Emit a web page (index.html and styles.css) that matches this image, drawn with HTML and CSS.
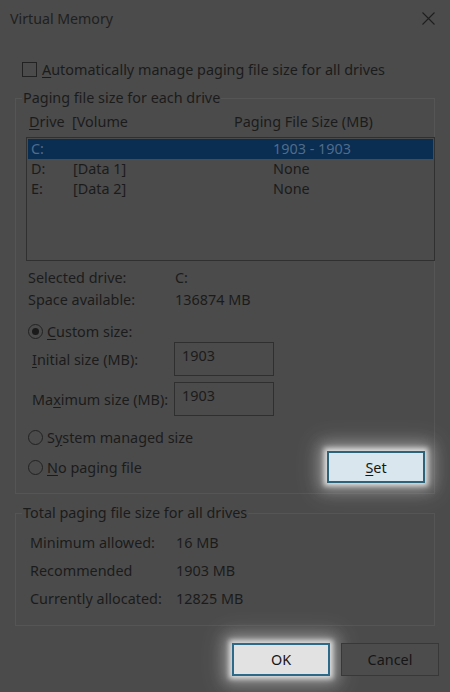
FILE: index.html
```html
<!DOCTYPE html>
<html>
<head>
<meta charset="utf-8">
<title>Virtual Memory</title>
<link rel="stylesheet" href="styles.css">
</head>
<body>
<div class="dialog">
  <div class="titlebar">
    <span class="title">Virtual Memory</span>
    <svg class="close" width="13" height="13" viewBox="0 0 13 13"><path d="M0.5 0.5L12.5 12.5M12.5 0.5L0.5 12.5" stroke="#1f1f1f" stroke-width="1.1" fill="none"/></svg>
  </div>

  <div class="auto-row">
    <span class="checkbox"></span>
    <span><u>A</u>utomatically manage paging file size for all drives</span>
  </div>

  <fieldset class="group group-drives">
    <legend>Paging file size for each drive</legend>
    <div class="list-header">
      <span class="col-drive"><u>D</u>rive</span>
      <span class="col-volume">[Volume</span>
      <span>Paging File Size (MB)</span>
    </div>
    <div class="listbox">
      <div class="list-row selected"><span class="c-drive">C:</span><span class="c-volume"></span><span>1903 - 1903</span></div>
      <div class="list-row"><span class="c-drive">D:</span><span class="c-volume">[Data 1]</span><span>None</span></div>
      <div class="list-row"><span class="c-drive">E:</span><span class="c-volume">[Data 2]</span><span>None</span></div>
    </div>

    <div class="info-row first"><span class="info-label">Selected drive:</span><span>C:</span></div>
    <div class="info-row"><span class="info-label">Space available:</span><span>136874 MB</span></div>

    <div class="radio-row custom"><span class="radio checked"></span><span><u>C</u>ustom size:</span></div>
    <div class="size-row"><span class="size-label"><u>I</u>nitial size (MB):</span><span class="input">1903</span></div>
    <div class="size-row second"><span class="size-label">Ma<u>x</u>imum size (MB):</span><span class="input">1903</span></div>

    <div class="radio-row system"><span class="radio"></span><span>S<u>y</u>stem managed size</span></div>
    <div class="last-row">
      <div class="radio-row"><span class="radio"></span><span><u>N</u>o paging file</span></div>
      <button class="btn btn-focus btn-set"><u>S</u>et</button>
    </div>
  </fieldset>

  <fieldset class="group group-total">
    <legend>Total paging file size for all drives</legend>
    <div class="total-row first"><span class="total-label">Minimum allowed:</span><span>16 MB</span></div>
    <div class="total-row"><span class="total-label">Recommended</span><span>1903 MB</span></div>
    <div class="total-row"><span class="total-label">Currently allocated:</span><span>12825 MB</span></div>
  </fieldset>

  <div class="buttons">
    <button class="btn btn-focus">OK</button>
    <button class="btn btn-dim">Cancel</button>
  </div>
</div>
</body>
</html>
```

FILE: styles.css
```css
html, body {
  margin: 0;
  padding: 0;
}
body {
  width: 450px;
  height: 692px;
  background: #4b4b4b;
  overflow: hidden;
  font-family: "Noto Sans", "Open Sans", sans-serif;
  font-size: 14.4px;
  color: #1b1b1b;
}
u { text-decoration: underline; text-underline-offset: 2px; }

.dialog { display: flex; flex-direction: column; }

.titlebar {
  height: 36px;
  display: flex;
  align-items: center;
  justify-content: space-between;
  padding: 0 15px 0 10px;
}
.title { font-size: 14.2px; color: #202020; }
.close { display: block; margin-top: 1px; }

.auto-row {
  margin-top: 23px;
  height: 20px;
  display: flex;
  align-items: center;
  padding-left: 22px;
  gap: 5px;
}
.checkbox {
  width: 13px;
  height: 13px;
  border: 1px solid #222;
}

.group {
  margin: 0 15px;
  padding: 0;
  border: 1px solid #555;
  min-width: 0;
}
.group legend {
  margin-left: 6px;
  padding: 0 1px;
  line-height: 18px;
  height: 18px;
}
.group-drives { margin-top: 10px; padding-bottom: 10px; }

.list-header {
  margin-top: 5px;
  height: 20px;
  line-height: 20px;
  display: flex;
  padding-left: 13px;
}
.col-drive { width: 43px; }
.col-volume { width: 162px; }

.listbox {
  margin: 5px -1px 0 10px;
  height: 124px;
  box-sizing: border-box;
  border: 1px solid #303030;
  padding: 1px;
}
.list-row {
  height: 20px;
  line-height: 20px;
  display: flex;
  padding-left: 3px;
}
.list-row.selected {
  background: #0a2d52;
  color: #4f6c8a;
}
.c-drive { width: 42px; }
.c-volume { width: 200px; }

.info-row {
  height: 22px;
  line-height: 22px;
  display: flex;
  padding-left: 12px;
}
.info-row.first { margin-top: 6px; }
.info-label { width: 147px; }

.radio-row {
  display: flex;
  align-items: center;
  gap: 4px;
  padding-left: 12px;
  height: 22px;
}
.radio {
  width: 13px;
  height: 13px;
  border: 1px solid #222;
  border-radius: 50%;
  position: relative;
  box-sizing: content-box;
}
.radio.checked::after {
  content: "";
  position: absolute;
  left: 3px;
  top: 3px;
  width: 7px;
  height: 7px;
  border-radius: 50%;
  background: #1b1b1b;
}
.radio-row.custom { margin-top: 10px; height: 21px; }
.radio-row.system { margin-top: 10px; }

.size-row {
  display: flex;
  align-items: center;
  padding-left: 16px;
  height: 34px;
}
.size-row.second { margin-top: 6px; }
.size-label { width: 142px; }
.input {
  width: 100px;
  height: 34px;
  box-sizing: border-box;
  border: 1px solid #2f2f2f;
  padding: 3px 0 0 7px;
  align-self: stretch;
}

.last-row {
  margin-top: 3px;
  height: 32px;
  display: flex;
  align-items: center;
  justify-content: space-between;
  padding-right: 9px;
}
.last-row .radio-row { padding-left: 12px; }

.btn {
  font-family: inherit;
  font-size: 14.4px;
  width: 98px;
  height: 33px;
  box-sizing: border-box;
  padding: 0;
  color: #161616;
}
.btn-focus {
  background: #dfe9f0;
  border: 2px solid #2d6378;
  box-shadow: 0 0 5px 3px rgba(255,255,255,0.7), 0 0 14px 7px rgba(255,255,255,0.35), 0 0 26px 12px rgba(255,255,255,0.12);
}
.btn-set { height: 32px; background: #d9e6ee; }
.btn-dim {
  background: #4c4c4c;
  border: 1px solid #383838;
}

.group-total { margin-top: 10px; padding-bottom: 12px; }
.total-row {
  height: 28px;
  line-height: 28px;
  display: flex;
  padding-left: 14px;
}
.total-row.first { margin-top: 7px; }
.total-label { width: 146px; }

.buttons {
  margin-top: 17px;
  display: flex;
  justify-content: flex-end;
  gap: 11px;
  padding-right: 11px;
}
.buttons .btn-focus { background: #e2e2e2; border-color: #2b6a88; }
```
